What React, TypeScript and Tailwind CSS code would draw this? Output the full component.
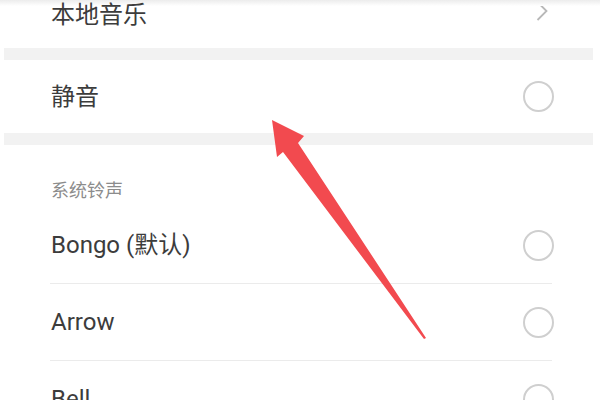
import React from "react";

const font = { fontFamily: '"Roboto", "Noto Sans CJK SC", sans-serif' };

function Radio() {
  return <div className="w-[31px] h-[31px] rounded-full border-2 border-[#cfcfcf] shrink-0" />;
}

function Row({ label, last }: { label: string; last?: boolean }) {
  return (
    <div className="flex flex-col">
      <div className="h-[76px] flex items-center justify-between pl-[51px] pr-[46px]">
        <span className="text-[24px] leading-[30px] text-[#3c3c3c]">{label}</span>
        <Radio />
      </div>
      {!last && (
        <div className="pl-[50px] pr-[48px]">
          <div className="h-px bg-[#ebebeb]" />
        </div>
      )}
    </div>
  );
}

export default function App() {
  return (
    <div className="relative w-[600px] h-[400px] overflow-hidden bg-white" style={font}>
      <div className="absolute top-0 left-0 right-0 h-[6px] bg-gradient-to-b from-[#ececec] to-white" />
      <div className="flex flex-col">
        <div className="h-[48px] flex items-start justify-between pl-[51px] pr-[52px]">
          <span className="text-[24px] leading-[30px] text-[#3c3c3c] relative">本地音乐</span>
          <svg width="12" height="22" viewBox="0 0 12 22" className="mt-[0px]">
            <path d="M1.5 2 L10.5 11 L1.5 20" fill="none" stroke="#b8b8b8" strokeWidth="1.8" />
          </svg>
        </div>
        <div className="h-[12px] bg-[#f2f2f2] ml-[4px] mr-[7px]" />
        <div className="h-[73px] flex items-center justify-between pl-[51px] pr-[46px]">
          <span className="text-[24px] leading-[30px] text-[#3c3c3c]">静音</span>
          <Radio />
        </div>
        <div className="h-[12px] bg-[#f2f2f2] ml-[4px] mr-[7px]" />
        <div className="pl-[51px] pt-[34px] pb-[4px]">
          <span className="block text-[18px] leading-[24px] text-[#8c8c8c]">系统铃声</span>
        </div>
        <Row label="Bongo (默认)" />
        <Row label="Arrow" />
        <Row label="Bell" last />
      </div>
      <svg className="absolute inset-0 pointer-events-none" width="600" height="400" viewBox="0 0 600 400">
        <polygon
          points="272,120 304,136 298,143 426,338 424,339 283,152 277,157"
          fill="#f24a4f"
        />
      </svg>
    </div>
  );
}
